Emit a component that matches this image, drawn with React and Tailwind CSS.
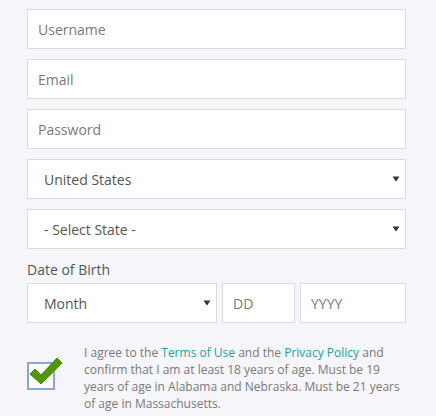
import React from "react";

const font = { fontFamily: '"Open Sans", "Liberation Sans", sans-serif' };

function Caret() {
  return (
    <svg width="8" height="6" viewBox="0 0 8 6" className="shrink-0">
      <path d="M0.5 0.5 L7.5 0.5 L4 5.5 Z" fill="#333" />
    </svg>
  );
}

function Field({ children, className = "" }) {
  return (
    <div
      className={`h-10 bg-white border border-[#dcdce0] flex items-center text-[14px] ${className}`}
    >
      {children}
    </div>
  );
}

export default function App() {
  return (
    <div className="w-[436px] h-[416px] bg-[#f5f5fa] overflow-hidden" style={font}>
      <div className="pl-[27px] pr-[30px] pt-[9px] flex flex-col gap-[10px]">
        <Field className="px-[10px] text-[#7a7a7a]">Username</Field>
        <Field className="px-[10px] text-[#7a7a7a]">Email</Field>
        <Field className="px-[10px] text-[#7a7a7a]">Password</Field>
        <Field className="pl-[16px] pr-[5px] justify-between text-[#555]">
          <span>United States</span>
          <Caret />
        </Field>
        <Field className="pl-[16px] pr-[5px] justify-between text-[#555]">
          <span>- Select State -</span>
          <Caret />
        </Field>
      </div>
      <div className="pl-[27px] pr-[30px] mt-[11px]">
        <div className="text-[14px] text-[#555] leading-[20px]">Date of Birth</div>
        <div className="flex gap-[5px] mt-[3px]">
          <Field className="w-[190px] pl-[16px] pr-[5px] justify-between text-[#555]">
            <span>Month</span>
            <Caret />
          </Field>
          <Field className="w-[73px] px-[10px] text-[#7a7a7a]">DD</Field>
          <Field className="flex-1 px-[10px] text-[#7a7a7a] text-[13px]">YYYY</Field>
        </div>
      </div>
      <div className="flex pl-[27px] mt-[21px]">
        <div className="w-[57px] shrink-0 pt-[18px]">
          <div className="relative w-[28px] h-[28px] border-2 border-[#8aa6d8] bg-white">
            <svg
              className="absolute left-[-2px] top-[-10px]"
              width="38"
              height="34"
              viewBox="0 0 38 34"
            >
              <path
                d="M3 20 L8 15 L14 21 L30 4 L35 9 L14 30 Z"
                fill="#4e9a06"
                stroke="#3f8a00"
                strokeWidth="1"
                strokeLinejoin="round"
              />
            </svg>
          </div>
        </div>
        <p className="w-[318px] text-[12px] leading-[17px] text-[#7a7a7a]">
          I agree to the <span className="text-[#1aa3a8]">Terms of Use</span> and the{" "}
          <span className="text-[#1aa3a8]">Privacy Policy</span> and confirm that I am at least 18 years
          of age. Must be 19 years of age in Alabama and Nebraska. Must be 21 years of age in
          Massachusetts.
        </p>
      </div>
    </div>
  );
}
